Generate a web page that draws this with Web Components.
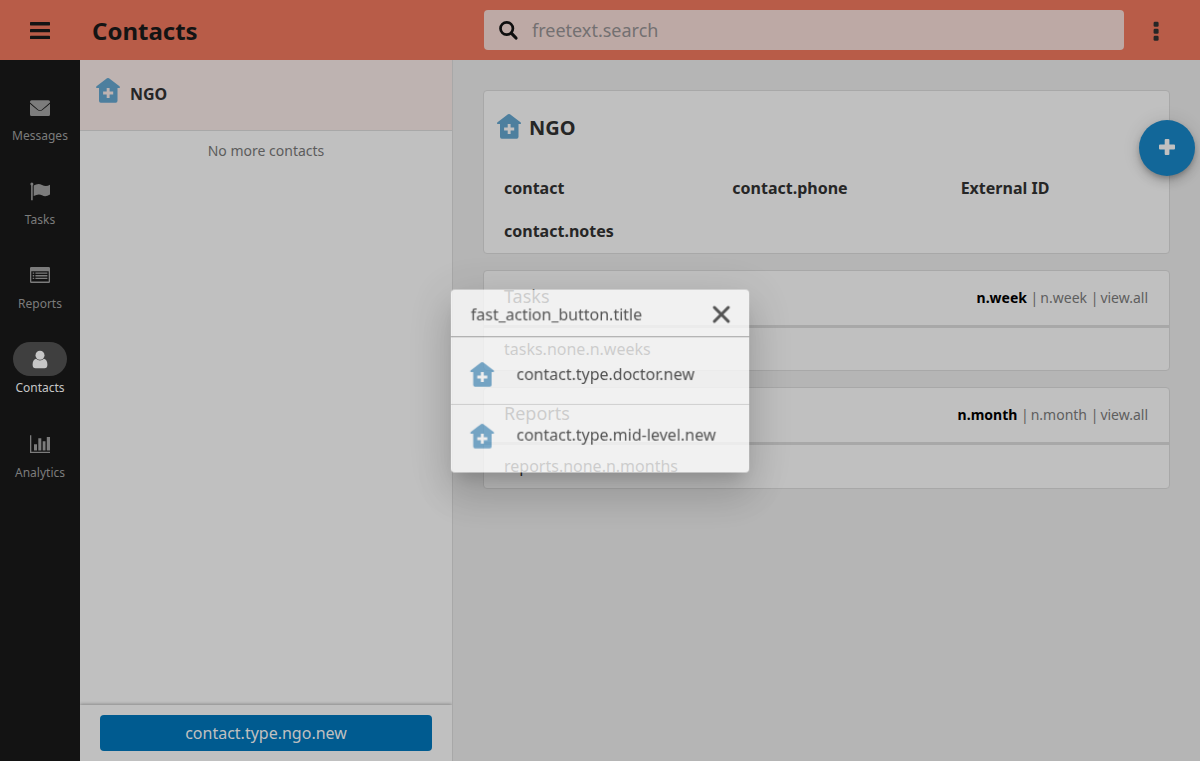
<!DOCTYPE html>
<html lang="en">
<head>
<meta charset="utf-8">
<title>Contacts</title>
<style>
html,body{margin:0;height:100%;overflow:hidden}
body{font-family:"Noto Sans",sans-serif;font-size:16px;color:#262626}
</style>
</head>
<body>
<contacts-app></contacts-app>
<script>
const define=(name,html)=>customElements.define(name,class extends HTMLElement{
  connectedCallback(){
    if(this.shadowRoot)return;
    const t=document.createElement('template');
    t.innerHTML=typeof html==='function'?html(this):html;
    this.attachShadow({mode:'open'}).append(t.content.cloneNode(true));
  }
});

const icons={
  menu:['0 0 20 20','<rect y="2" width="20" height="3.400" rx=".6"/><rect y="8.900" width="20" height="3.400" rx=".6"/><rect y="15.700" width="20" height="3.400" rx=".6"/>'],
  search:['0 0 20 20','<circle cx="7.700" cy="8.500" r="6.200" fill="none" stroke="currentColor" stroke-width="2.700"/><path d="M12.300 13.200l4.700 4.800" stroke="currentColor" stroke-width="3.200" stroke-linecap="round"/>'],
  dots:['0 0 6 20','<rect x=".6" y="0.800" width="5" height="5" rx="1.3"/><rect x=".6" y="7.800" width="5" height="5" rx="1.3"/><rect x=".6" y="14.800" width="5" height="5" rx="1.3"/>'],
  envelope:['0 0 20 20','<path d="M1.500 3.200h17Q20 3.200 20 4.700v.7Q16 8.900 12 12.400q-2 1.700-4 0Q4 8.900 0 5.400v-.7Q0 3.200 1.500 3.200zM0 6.800q4 3.500 7.500 6.300 2.500 1.900 5 0Q16 10.300 20 6.800v10.600q0 1.500-1.500 1.500h-17Q0 18.900 0 17.400z"/>'],
  flag:['0 0 20 20','<path d="M1.100 3h1.600V19.200H1.100z"/><circle cx="1.900" cy="3" r="1.500"/><path d="M3.700 4.600Q8 1.600 12 3.900T20 3.700V13.600q-4.500 2.700-8 .7t-8.300.8z"/>'],
  list:['0 0 20 20','<path fill-rule="evenodd" d="M1.300 2h17.400Q20 2 20 3.300v13.400q0 1.300-1.300 1.300H1.300Q0 18 0 16.700V3.300Q0 2 1.300 2zm0 4.300v10.300h17.400V6.300z"/><path d="M2.700 7.500h1.500v1.300H2.700zM5.400 7.500h12v1.300h-12zM2.700 10.100h1.500v1.300H2.700zM5.400 10.100h12v1.300h-12zM2.700 12.700h1.500V14H2.700zM5.400 12.700h12V14h-12z"/>'],
  user:['0 0 20 20','<circle cx="10" cy="6.200" r="4.500"/><path d="M6 9.800q4 3.200 8 0 3.400 1 3.400 6 0 3.500-3 3.500H5.600q-3 0-3-3.500 0-5 3.400-6z"/>'],
  chart:['0 0 20 20','<path d="M0 1.300h1.300v16.400H20v1.300H0zM4 10.300h3v6.200H4zM8.300 4.300h3v12.200h-3zM12.700 7.200h2.800v9.300h-2.800zM16.800 2.900H20v13.600h-3.200z"/>'],
  house:['0 0 24 25','<path fill-rule="evenodd" d="M12 0Q13 .2 14 .9L23.500 8.200Q24.500 9.500 23.500 10H21.500V22.800Q21.500 24.700 19.700 24.700H4.800Q3 24.700 3 22.800V10H.5Q-.5 9.500.5 8.200L10 .9Q11 .2 12 0zM10.700 10v3.600H7.100v2.900h3.600v3.600h2.900v-3.600h3.600v-2.900h-3.600V10z"/>'],
  plus:['0 0 16 16','<path d="M6.700 0h2.700q1 0 1 1v4.600H15q1 0 1 1v2.800q0 1-1 1h-4.600V15q0 1-1 1H6.700q-1 0-1-1v-4.600H1q-1 0-1-1V6.600q0-1 1-1h4.700V1q0-1 1-1z"/>'],
  close:['0 0 18 18','<path d="M2 2l14 14M16 2L2 16" stroke="currentColor" stroke-width="3" stroke-linecap="round"/>']
};
define('app-icon',el=>{
  const [box,body]=icons[el.getAttribute('name')];
  return `<style>:host{display:block;width:20px;height:20px;flex:none}svg{display:block;width:100%;height:100%;overflow:visible}</style><svg viewBox="${box}" fill="currentColor">${body}</svg>`;
});

define('app-header',`<style>
:host{display:flex;align-items:center;height:60px;background:#b85c48;color:#141414;flex:none}
.menu{width:80px;display:flex;justify-content:center}
h1{margin:2px 0 0 12px;width:392px;font-size:24px;line-height:32px;font-weight:700}
.search{display:flex;align-items:center;width:640px;height:40px;box-sizing:border-box;padding-left:15px;background:#bda9a5;border-radius:4px;font-size:18px;color:#737071}
.search app-icon{color:#0f0f0f;margin-right:13px}
.dots{width:6px;height:20px;margin:2px 0 0 29px;color:#262626}
</style>
<div class="menu"><app-icon name="menu"></app-icon></div><h1>Contacts</h1>
<div class="search"><app-icon name="search"></app-icon><span>freetext.search</span></div>
<app-icon class="dots" name="dots"></app-icon>`);

define('rail-item',el=>`<style>
:host{display:flex;flex-direction:column;align-items:center;height:84px;color:#7c7c7c;font-size:12px;line-height:16px}
:host([active]){color:#c6c6c6}
.pill{width:54px;height:34px;border-radius:17px;display:flex;align-items:center;justify-content:center;margin-bottom:4px}
:host([active]) .pill{background:#3f3f3f}
</style><div class="pill"><app-icon name="${el.getAttribute('icon')}"></app-icon></div><slot></slot>`);

define('nav-rail',`<style>:host{display:block;width:80px;padding-top:30px;box-sizing:border-box;background:#131313;flex:none}.last{padding-top:1px}</style>
<rail-item icon="envelope">Messages</rail-item><rail-item icon="flag">Tasks</rail-item><rail-item icon="list">Reports</rail-item><rail-item icon="user" active>Contacts</rail-item><rail-item class="last" icon="chart">Analytics</rail-item>`);

define('contact-list',`<style>
:host{display:flex;flex-direction:column;width:373px;box-sizing:border-box;border-right:1px solid #a8a8a8;background:#c0c0c0;flex:none}
.item{display:flex;height:70px;padding-left:16px;background:#beb3b1;border-bottom:1px solid #a8a8a8;font-weight:700;line-height:24px}
.item app-icon{width:24px;height:25px;margin-top:18px;color:#4d7f9e}
.item span{margin:22px 0 0 10px}
.end{flex:1;padding-top:10px;text-align:center;font-size:14px;line-height:20px;color:#5c5c5c}
footer{height:56px;box-sizing:border-box;padding:10px 20px;box-shadow:0 -1px 3px rgba(0,0,0,.28);clip-path:inset(-5px 0 0 0)}
.btn{height:36px;border-radius:4px;background:#005b90;color:#c0c0c0;text-align:center;line-height:36px}
</style>
<div class="item"><app-icon name="house"></app-icon><span>NGO</span></div>
<div class="end">No more contacts</div>
<footer><div class="btn">contact.type.ngo.new</div></footer>`);

define('report-card',el=>`<style>
:host{display:block;background:#c0c0c0;border:1px solid #a8a8a8;border-radius:4px;margin-top:16px}
header{display:flex;justify-content:space-between;align-items:center;height:54px;box-sizing:border-box;padding:0 21px 2px 20px}
.line{height:3px;background:#a8a8a8}
h2{margin:0 0 2px;font-size:18px;font-weight:400}
.f{font-size:14px;color:#5e5e5e;white-space:pre}
i{font-style:normal;margin-right:2px}
b{color:#000}
.body{height:42px;padding-left:20px;line-height:42px}
:host([tall]) .body{height:43px;line-height:43px}
</style><header><h2>${el.getAttribute('heading')}</h2><div class="f"><b>${el.getAttribute('unit')}</b> <i>|</i>${el.getAttribute('unit')} <i>|</i>view.all</div></header><div class="line"></div><div class="body"><slot></slot></div>`);

define('contact-detail',`<style>
:host{display:block;flex:1;background:#b5b5b5;padding:30px 30px 0;box-sizing:border-box;min-width:0}
.card{background:#c0c0c0;border:1px solid #a8a8a8;border-radius:4px;height:162px}
.title{display:flex;padding:22px 0 0 13px;height:52px}
.title app-icon{width:24px;height:25px;margin-top:1px;color:#4d7f9e}
h2{margin:0 0 0 8px;font-size:20px;line-height:30px}
.grid{display:grid;grid-template-columns:repeat(3,1fr);padding-top:12px;grid-auto-rows:43px;font-weight:700;line-height:22px}
.grid span{padding-left:20px}
</style>
<div class="card"><div class="title"><app-icon name="house"></app-icon><h2>NGO</h2></div>
<div class="grid"><span>contact</span><span>contact.phone</span><span>External ID</span><span>contact.notes</span></div></div>
<report-card heading="Tasks" unit="n.week">tasks.none.n.weeks</report-card>
<report-card heading="Reports" unit="n.month" tall>reports.none.n.months</report-card>`);

define('fab-button',`<style>
:host{position:absolute;left:1139px;top:120px;width:56px;height:56px;border-radius:50%;background:#126799;color:#c0c0c0;display:flex;align-items:center;justify-content:center;box-shadow:0 3px 5px -1px rgba(0,0,0,.2),0 6px 10px rgba(0,0,0,.14),0 1px 18px rgba(0,0,0,.12)}
app-icon{width:16px;height:16px;margin-bottom:2px}
</style><app-icon name="plus"></app-icon>`);

define('action-dialog',`<style>
:host{position:absolute;left:450px;top:289px;width:300px;height:184px;border-radius:4px;background:#fff;opacity:.77;color:#333;transform:scale(.9945);will-change:transform,opacity;box-shadow:0 11px 15px -7px rgba(0,0,0,.2),0 24px 38px 3px rgba(0,0,0,.14),0 9px 46px 8px rgba(0,0,0,.12)}
header{display:flex;justify-content:space-between;align-items:center;height:48px;box-sizing:border-box;padding:0 19.500px 1px 20px;border-bottom:1px solid #999}
header span{margin-top:3px}
header app-icon{width:18px;height:18px;margin-top:3px}
.row{display:flex;align-items:center;height:67px;border-bottom:1px solid #d2d2d2;padding-left:18.500px}
.row app-icon{width:25px;height:25px;color:#609ec8;margin:7px 22.500px 0 0}
.row span{margin-top:6px}
.row.last{height:62px;border:0}.row.last app-icon{margin-top:0}.row.last span{margin-top:-2px}
</style>
<header><span>fast_action_button.title</span><app-icon name="close"></app-icon></header>
<div class="row"><app-icon name="house"></app-icon><span>contact.type.doctor.new</span></div>
<div class="row last"><app-icon name="house"></app-icon><span>contact.type.mid-level.new</span></div>`);

define('contacts-app',`<style>:host{display:flex;flex-direction:column;height:100vh;position:relative;overflow:hidden}main{display:flex;flex:1;min-height:0}</style>
<app-header></app-header><main><nav-rail></nav-rail><contact-list></contact-list><contact-detail></contact-detail></main>
<fab-button></fab-button><action-dialog></action-dialog>`);
</script>
</body>
</html>
